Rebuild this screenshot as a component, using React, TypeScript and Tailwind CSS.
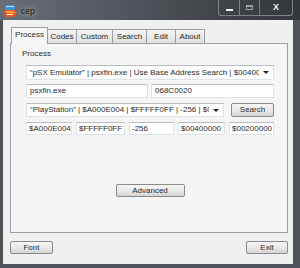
import React from 'react';

const tabs = [
  { label: 'Process', w: 'w-[37px]' },
  { label: 'Codes', w: 'w-[30px]' },
  { label: 'Custom', w: 'w-[37px]' },
  { label: 'Search', w: 'w-[35px]' },
  { label: 'Edit', w: 'w-[30px]' },
  { label: 'About', w: 'w-[30px]' },
];

function Field({ className, children }: { className: string; children: React.ReactNode }) {
  return (
    <div
      className={`flex items-center bg-white border border-[#dfe3e8] border-t-[#b9bdc3] px-[2px] overflow-hidden whitespace-nowrap text-[#2a2a2a] ${className}`}
    >
      {children}
    </div>
  );
}

function Combo({ className, children }: { className: string; children: React.ReactNode }) {
  return (
    <div
      className={`flex items-center bg-white border border-[#dfe3e8] border-t-[#b9bdc3] pl-[3px] text-[#2a2a2a] ${className}`}
    >
      <span className="flex-1 overflow-hidden whitespace-nowrap">{children}</span>
      <span className="w-[14px] flex justify-center">
        <svg width="6" height="3" viewBox="0 0 6 3">
          <path d="M0 0h6L3 3z" fill="#222" />
        </svg>
      </span>
    </div>
  );
}

function Button({ className, children }: { className: string; children: React.ReactNode }) {
  return (
    <div
      className={`flex items-center justify-center rounded-[2px] border border-[#8a8a8a] bg-gradient-to-b from-[#f6f6f6] via-[#e9e9e9] to-[#d4d4d4] text-[#2a2a2a] ${className}`}
    >
      {children}
    </div>
  );
}

function AppIcon() {
  return (
    <svg width="13" height="13" viewBox="0 0 13 13">
      <rect x="1" y="0" width="10" height="5" rx="1.5" fill="#3d8fd6" />
      <rect x="2" y="1" width="8" height="1" fill="#bfe3ff" />
      <path d="M0 5h11l2 3-3 4H1z" fill="#e8562a" />
      <path d="M2 6h8l1 2H2z" fill="#f7a13a" />
      <rect x="3" y="9" width="6" height="1" fill="#fff3d0" />
    </svg>
  );
}

export default function App() {
  return (
    <div className="w-[300px] h-[268px] bg-[#4e535a] font-['Liberation_Sans',Arial,sans-serif] text-[8px] overflow-hidden">
      {/* Title bar */}
      <div className="h-[20px] flex items-start bg-gradient-to-r from-[#6a6f76] via-[#4c5157] to-[#33363b]">
        <div className="pl-[4px] pt-[5px]">
          <AppIcon />
        </div>
        <span className="ml-[4px] mt-[6px] text-[8.5px] leading-[10px] text-[#111] [text-shadow:0_0_4px_#d8dde2]">
          cep
        </span>
        <div className="flex-1" />
        <div className="mr-[7px] flex h-[16px] border border-t-0 border-[#7d8288] rounded-b-[3px] overflow-hidden">
          <div className="w-[21px] flex items-center justify-center border-r border-[#7d8288]">
            <div className="w-[7px] h-[2px] bg-[#f3f3f3] mt-[4px]" />
          </div>
          <div className="w-[20px] flex items-center justify-center border-r border-[#7d8288]">
            <div className="w-[7px] h-[5px] border border-[#9da1a6] border-t-2" />
          </div>
          <div className="w-[32px] flex items-center justify-center text-[#f4f4f4] text-[9px] font-bold">
            X
          </div>
        </div>
      </div>

      {/* Client area */}
      <div className="ml-[3px] w-[290px] h-[244px] bg-[#f0f0f0] flex flex-col">
        <div className="flex items-end pl-[8px] pt-[7px]">
          {tabs.map((t, i) => (
            <div
              key={t.label}
              className={
                i === 0
                  ? `relative z-10 h-[17px] pb-[3px] ${t.w} flex items-center justify-center border border-b-0 border-[#9a9da3] bg-[#f7f7f7] text-[#2a2a2a]`
                  : `h-[14px] mb-[1px] -ml-px ${t.w} flex items-center justify-center border border-b-0 border-[#9a9da3] bg-gradient-to-b from-[#f4f4f4] to-[#e0e0e0] text-[#2a2a2a]`
              }
            >
              {t.label}
            </div>
          ))}
        </div>

        <div className="relative -mt-px ml-[7px] mr-[5px] h-[190px] border border-[#9a9da3] bg-[#f5f5f5] flex flex-col pl-[15px] pr-[13px]">
          <div className="pt-[5px] -ml-[4px] h-[15px] leading-[10px] text-[#2a2a2a]">Process</div>
          <Combo className="mt-[6px] h-[15px]">
            “pSX Emulator” | psxfin.exe | Use Base Address Search | $00400000 | $00200000
          </Combo>
          <div className="mt-[4px] flex gap-[3px] h-[14px]">
            <Field className="w-[122px] pl-[3px]">psxfin.exe</Field>
            <Field className="flex-1 pl-[3px]">068C0020</Field>
          </div>
          <div className="mt-[5px] flex gap-[7px] h-[14px]">
            <Combo className="w-[198px]">
              “PlayStation” | $A000E004 | $FFFFF0FF | -256 | $00400000 | $00200000
            </Combo>
            <Button className="flex-1">Search</Button>
          </div>
          <div className="mt-[5px] flex gap-[4px] h-[13px]">
            <Field className="w-[46px]">$A000E004</Field>
            <Field className="w-[49px]">$FFFFF0FF</Field>
            <Field className="w-[45px]">-256</Field>
            <Field className="w-[47px]">$00400000</Field>
            <Field className="flex-1">$00200000</Field>
          </div>
          <Button className="mt-[49px] self-center w-[69px] h-[13px]">Advanced</Button>
        </div>

        <div className="mt-[8px] flex justify-between pl-[7px] pr-[5px]">
          <Button className="w-[43px] h-[13px]">Font</Button>
          <Button className="w-[42px] h-[13px]">Exit</Button>
        </div>
      </div>
    </div>
  );
}
